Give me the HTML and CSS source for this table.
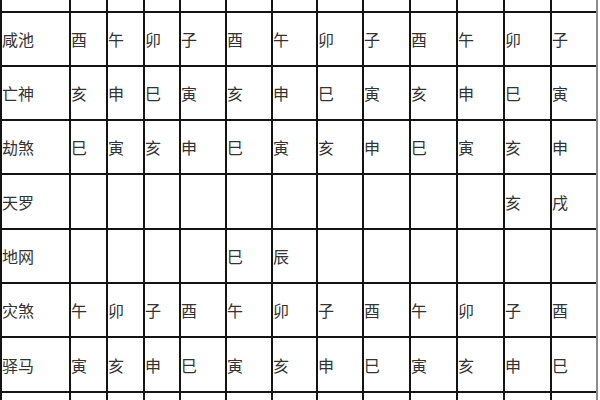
FILE: index.html
```html
<!DOCTYPE html>
<html lang="zh">
<head>
<meta charset="utf-8">
<title>神煞表</title>
<link rel="stylesheet" href="styles.css">
</head>
<body>
<div class="grid">
  <div class="c"></div><div class="c"></div><div class="c"></div><div class="c"></div><div class="c"></div><div class="c"></div><div class="c"></div><div class="c"></div><div class="c"></div><div class="c"></div><div class="c"></div><div class="c"></div><div class="c"></div>

  <div class="c label">咸池</div><div class="c">酉</div><div class="c">午</div><div class="c">卯</div><div class="c">子</div><div class="c">酉</div><div class="c">午</div><div class="c">卯</div><div class="c">子</div><div class="c">酉</div><div class="c">午</div><div class="c">卯</div><div class="c">子</div>

  <div class="c label">亡神</div><div class="c">亥</div><div class="c">申</div><div class="c">巳</div><div class="c">寅</div><div class="c">亥</div><div class="c">申</div><div class="c">巳</div><div class="c">寅</div><div class="c">亥</div><div class="c">申</div><div class="c">巳</div><div class="c">寅</div>

  <div class="c label">劫煞</div><div class="c">巳</div><div class="c">寅</div><div class="c">亥</div><div class="c">申</div><div class="c">巳</div><div class="c">寅</div><div class="c">亥</div><div class="c">申</div><div class="c">巳</div><div class="c">寅</div><div class="c">亥</div><div class="c">申</div>

  <div class="c label">天罗</div><div class="c"></div><div class="c"></div><div class="c"></div><div class="c"></div><div class="c"></div><div class="c"></div><div class="c"></div><div class="c"></div><div class="c"></div><div class="c"></div><div class="c">亥</div><div class="c">戌</div>

  <div class="c label">地网</div><div class="c"></div><div class="c"></div><div class="c"></div><div class="c"></div><div class="c">巳</div><div class="c">辰</div><div class="c"></div><div class="c"></div><div class="c"></div><div class="c"></div><div class="c"></div><div class="c"></div>

  <div class="c label">灾煞</div><div class="c">午</div><div class="c">卯</div><div class="c">子</div><div class="c">酉</div><div class="c">午</div><div class="c">卯</div><div class="c">子</div><div class="c">酉</div><div class="c">午</div><div class="c">卯</div><div class="c">子</div><div class="c">酉</div>

  <div class="c label">驿马</div><div class="c">寅</div><div class="c">亥</div><div class="c">申</div><div class="c">巳</div><div class="c">寅</div><div class="c">亥</div><div class="c">申</div><div class="c">巳</div><div class="c">寅</div><div class="c">亥</div><div class="c">申</div><div class="c">巳</div>

  <div class="c"></div><div class="c"></div><div class="c"></div><div class="c"></div><div class="c"></div><div class="c"></div><div class="c"></div><div class="c"></div><div class="c"></div><div class="c"></div><div class="c"></div><div class="c"></div><div class="c"></div>
</div>
</body>
</html>
```

FILE: styles.css
```css
html, body {
  margin: 0;
  padding: 0;
  background: #ffffff;
  overflow: hidden;
}

.grid {
  display: grid;
  grid-template-columns: 67px 35px 35px 34px 44px 44px 43px 44px 45px 45px 45px 45px 44px;
  grid-template-rows: 52px 52px 52px 52px 53px 52px 52px 53px 52px;
  gap: 2px;
  width: max-content;
  margin-top: -41px;
  padding-left: 2px;
  background: #141414;
  border-right: 2px solid #8c8c8c;
}

.c {
  background: #ffffff;
  display: flex;
  align-items: center;
  padding-left: 0;
  font-family: "Noto Sans CJK SC", "Noto Sans", sans-serif;
  font-size: 16px;
  color: #333333;
  line-height: 1;
  white-space: nowrap;
  overflow: hidden;
}

.label {
  letter-spacing: 0;
}
```
